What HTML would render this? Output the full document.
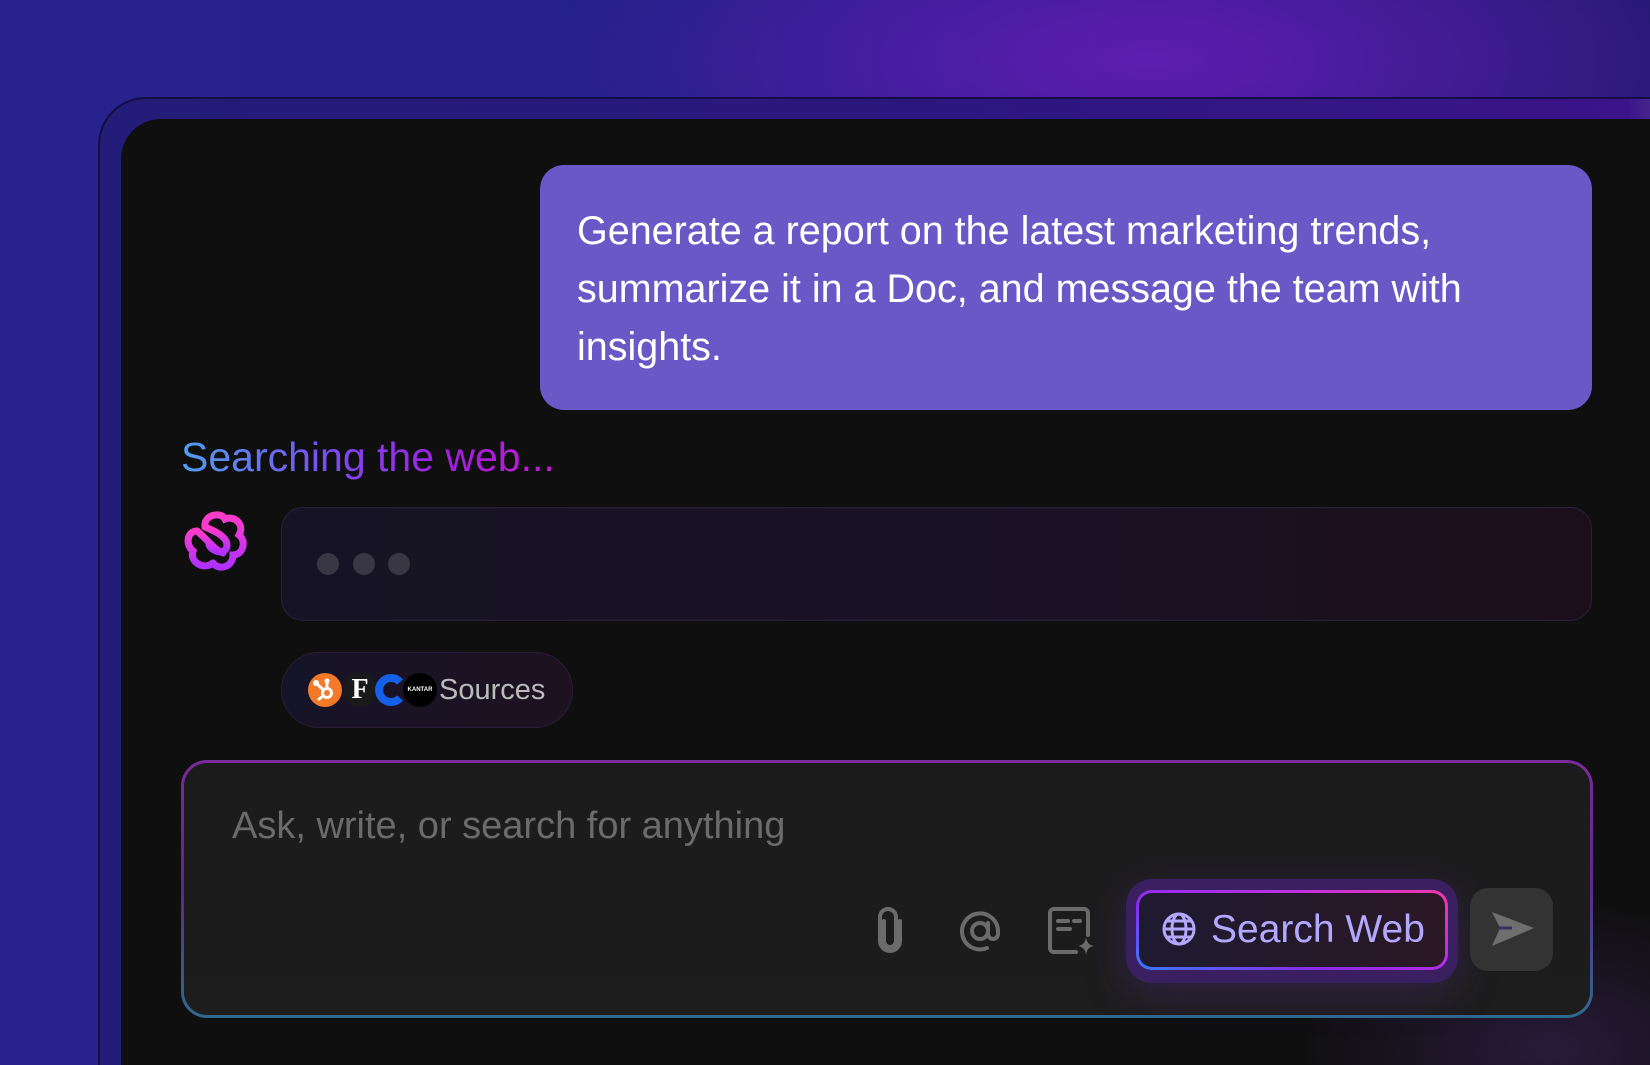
<!DOCTYPE html>
<html><head><meta charset="utf-8"><style>
*{margin:0;padding:0;box-sizing:border-box}
html,body{width:1650px;height:1065px;overflow:hidden}
body{position:relative;font-family:"Liberation Sans",sans-serif;background:#241c82}
.wrap{position:absolute;left:0;top:0;width:1650px;height:1065px;overflow:hidden;
background:radial-gradient(ellipse 600px 200px at 1150px 60px,rgba(110,30,190,.75) 0%,rgba(90,26,168,0) 100%),
linear-gradient(90deg,#28228c 0%,#24208a 40%,#2e1a8a 70%,#221a70 100%);}
.frame{position:absolute;left:98px;top:97px;width:1700px;height:1100px;border-radius:48px;
background:linear-gradient(90deg,#231c78 0%,#2c1780 50%,#3a1488 90%,#8a82b0 100%);border:2px solid #140e44}
.panel{position:absolute;left:121px;top:119px;width:1700px;height:1100px;border-radius:40px;background:#0f0f0f}
.glow{position:absolute;left:1300px;top:900px;width:500px;height:300px;border-radius:50%;background:radial-gradient(closest-side,rgba(70,40,110,.45),rgba(70,40,110,0))}
.bubble{position:absolute;left:540px;top:165px;width:1052px;height:245px;border-radius:24px;background:#6a58c6;color:#fff;
font-size:39.5px;line-height:58px;padding:37px 0 0 37px;white-space:nowrap}
.search{position:absolute;left:181px;top:434px;font-size:41px;
background:linear-gradient(90deg,#4ea0f0 0%,#7a4cf0 40%,#a020e0 70%,#c01ad0 100%);-webkit-background-clip:text;background-clip:text;color:transparent}
.dots{position:absolute;left:281px;top:507px;width:1311px;height:114px;border-radius:22px;
background:linear-gradient(90deg,#161424 0%,#1b1226 60%,#1c0f1a 100%);border:1.5px solid #2a1f3a}
.dot{position:absolute;top:45px;width:22px;height:22px;border-radius:50%;background:#3a3744}
.pill{position:absolute;left:281px;top:652px;width:292px;height:76px;border-radius:38px;
background:linear-gradient(90deg,#161428,#1e1220);border:1.5px solid #2a1d38}
.ic{position:absolute;top:20px;width:34px;height:34px;border-radius:50%}
.input{position:absolute;left:181px;top:760px;width:1412px;height:258px;border-radius:26px;
border:3px solid transparent;background:linear-gradient(#1b1b1b,#1d1d1d) padding-box,linear-gradient(180deg,#7a2a9a 0%,#5a2a8a 50%,#2e6a8e 100%) border-box}
.ph{position:absolute;left:48px;top:42px;font-size:38px;color:#6b6b6b}
.sw{position:absolute;left:942px;top:116px;width:332px;height:104px;border-radius:26px;background:#3a2060;box-shadow:0 10px 40px rgba(90,50,150,.35)}
.swi{position:absolute;left:10px;top:11px;width:312px;height:80px;border-radius:16px;border:3.5px solid transparent;
background:linear-gradient(90deg,#1e1a30,#2a1825) padding-box,linear-gradient(20deg,#3a7aff 0%,#8a2af0 35%,#c030e0 70%,#f03aa8 100%) border-box;
color:#b2a8ff;font-size:39px;line-height:73px;padding-left:72px}
.send{position:absolute;left:1286px;top:125px;width:83px;height:83px;border-radius:18px;background:#333}
</style></head><body><div class="wrap">
<div class="frame"></div>
<div class="panel"></div>
<div class="glow"></div>
<div class="bubble">Generate a report on the latest marketing trends,<br>summarize it in a Doc, and message the team with<br>insights.</div>
<div class="search">Searching the web...</div>
<svg style="position:absolute;left:183px;top:509px" width="66" height="66" viewBox="0 0 66 66">
<defs><linearGradient id="lg" x1="0" y1="0" x2="0" y2="1"><stop offset="0" stop-color="#ff3cc8"/><stop offset="1" stop-color="#b030ff"/></linearGradient></defs>
<g fill="none" stroke="url(#lg)" stroke-width="7" stroke-linecap="round">
<path d="M22 18 C20 6 38 2 42 10 C52 6 62 16 56 26 C64 32 60 46 50 46 C50 58 36 62 30 54"/>
<path d="M30 54 C20 62 6 52 10 42 C2 36 4 22 14 22"/>
<path d="M22 18 C32 22 44 28 44 36 C44 46 30 44 26 36"/>
<path d="M14 22 C24 30 30 40 40 44"/>
</g></svg>
<div class="dots"><div class="dot" style="left:35px"></div><div class="dot" style="left:71px"></div><div class="dot" style="left:106px"></div></div>
<div class="pill">
<div class="ic" style="left:26px;background:#f47a2a"><svg width="34" height="34" viewBox="0 0 34 34"><g stroke="#fff" stroke-width="3" fill="none"><circle cx="19" cy="20" r="4.5"/><path d="M19 15V9M15.5 17L9 11M15 23l-5 4"/></g><circle cx="19" cy="8" r="2.5" fill="#fff"/><circle cx="8" cy="10" r="3" fill="#fff"/></svg></div>
<div class="ic" style="left:61px;background:#1a1a1a;color:#fff;font-family:'Liberation Serif',serif;font-weight:bold;font-size:28px;text-align:center;line-height:34px">F</div>
<div class="ic" style="left:91px;background:transparent"><svg width="34" height="34"><path d="M27 9A12 12 0 1 0 27 25" stroke="#1560e8" stroke-width="8" fill="none"/></svg></div>
<div class="ic" style="left:121px;background:#000;color:#fff;font-size:6px;text-align:center;line-height:34px;font-weight:bold">KANTAR</div>
<div style="position:absolute;left:157px;top:21px;font-size:29px;color:#bbb">Sources</div>
</div>
<div class="input">
<div class="ph">Ask, write, or search for anything</div>
<svg style="position:absolute;left:686px;top:144px" width="40" height="48" viewBox="0 0 40 48" fill="none" stroke="#6b6b6b" stroke-width="4" stroke-linecap="round"><path d="M14 14v20a6 6 0 0 0 12 0V10a8 8 0 0 0-16 0v24a10 10 0 0 0 20 0V14"/></svg>
<svg style="position:absolute;left:772px;top:144px" width="48" height="48" viewBox="0 0 48 48" fill="none" stroke="#6b6b6b" stroke-width="4" stroke-linecap="round"><circle cx="24" cy="24" r="8"/><path d="M32 16v11a5 5 0 0 0 10 0v-3A18 18 0 1 0 31 41"/></svg>
<svg style="position:absolute;left:862px;top:144px" width="50" height="50" viewBox="0 0 50 50" fill="none" stroke="#6b6b6b" stroke-width="4" stroke-linecap="round"><path d="M30 45H8a4 4 0 0 1-4-4V6a4 4 0 0 1 4-4h30a4 4 0 0 1 4 4v22"/><path d="M12 14h10M28 14h6M12 22h12"/><path d="M40 30c1 6 3 8 8 9-5 1-7 3-8 9-1-6-3-8-8-9 5-1 7-3 8-9z" fill="#6b6b6b" stroke="none"/></svg>
<div class="sw"><div class="swi">Search Web
<svg style="position:absolute;left:22px;top:18px" width="36" height="36" viewBox="0 0 36 36" fill="none" stroke="#b2a8ff" stroke-width="3"><circle cx="18" cy="18" r="15"/><ellipse cx="18" cy="18" rx="7" ry="15"/><path d="M3 18h30M6 10h24M6 26h24"/></svg></div></div>
<div class="send"><svg style="position:absolute;left:20px;top:22px" width="46" height="40" viewBox="0 0 46 40"><path d="M2 2L44 18L2 36L10 18Z" fill="#6e6e6e"/><path d="M8 18h14" stroke="#3a3060" stroke-width="3"/></svg></div>
</div>
</div></body></html>
